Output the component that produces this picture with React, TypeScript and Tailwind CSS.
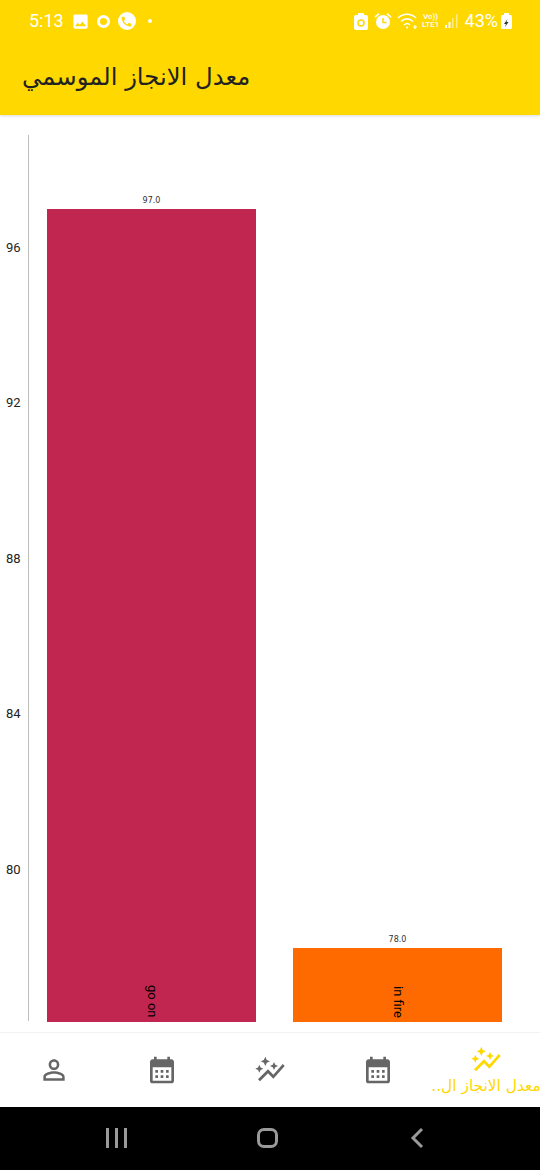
import React from 'react';
import { MdPersonOutline, MdCalendarMonth, MdAutoGraph, MdImage, MdPhone } from 'react-icons/md';

const axisLabels = [96, 92, 88, 84, 80];

const bars = [
  { name: 'go on', value: '97.0', height: 'h-[813px]', color: 'bg-[#c0264f]' },
  { name: 'in fire', value: '78.0', height: 'h-[74px]', color: 'bg-[#ff6a00]' },
];

const StatusBar: React.FC = () => (
  <div className="flex h-[42px] items-center pl-[29px] pr-[28px] text-white">
    <span className="text-[18px] leading-none">5:13</span>
    <MdImage className="ml-[7px]" size={19} />
    <span className="ml-[7px] h-[13px] w-[13px] rounded-full border-[3.5px] border-white" />
    <span className="ml-[8px] flex h-[18px] w-[18px] items-center justify-center rounded-full bg-white">
      <MdPhone className="text-[#ffd800]" size={13} />
    </span>
    <span className="ml-[12px] h-[4px] w-[4px] rounded-full bg-white" />
    <div className="ml-auto flex items-center">
      <svg width="14" height="17" viewBox="0 0 14 17" fill="white">
        <path d="M4 0h6v2h2a2 2 0 0 1 2 2v11a2 2 0 0 1-2 2H2a2 2 0 0 1-2-2V4a2 2 0 0 1 2-2h2z" />
        <circle cx="7" cy="10" r="3" fill="none" stroke="#ffd800" strokeWidth="1.5" />
      </svg>
      <svg className="ml-[6px]" width="18" height="18" viewBox="0 0 18 18" fill="white">
        <circle cx="9" cy="10" r="7" />
        <path d="M0.500 4.500 4.500 1l1 1.200-4 3.500zM17.500 4.500 13.500 1l-1 1.200 4 3.500z" />
        <path d="M9 6v4.500h3.500" fill="none" stroke="#ffd800" strokeWidth="1.500" />
      </svg>
      <svg className="ml-[5px]" width="22" height="18" viewBox="0 0 22 18" fill="none" stroke="white" strokeWidth="1.6">
        <path d="M1 6c5-5 13-5 18 0M4 9.500c3.500-3.500 8.500-3.500 12 0M7 13c2-2 4-2 6 0" />
        <circle cx="10" cy="15.500" r="1" fill="white" stroke="none" />
        <path d="M18 13v4M16 15h4" strokeWidth="1.200" />
      </svg>
      <div className="ml-[3px] flex w-[18px] flex-col items-center text-[8px] font-medium leading-[8px]">
        <span>Vo))</span>
        <span>LTE1</span>
      </div>
      <svg className="ml-[5px]" width="14" height="16" viewBox="0 0 14 16" fill="white">
        <rect x="0" y="12" width="2" height="3" />
        <rect x="3.500" y="9" width="2" height="6" />
        <rect x="7" y="5" width="1.500" height="10" opacity="0.5" />
        <rect x="11" y="1" width="1.500" height="14" opacity="0.5" />
      </svg>
      <span className="ml-[6px] text-[18px] leading-none">43%</span>
      <svg className="ml-[3px]" width="11" height="16" viewBox="0 0 11 16" fill="white">
        <path d="M3 0h5v2h1.500A1.500 1.500 0 0 1 11 3.500V14.500A1.500 1.500 0 0 1 9.500 16h-8A1.500 1.500 0 0 1 0 14.500V3.500A1.500 1.500 0 0 1 1.500 2H3z" />
        <path d="M6.500 6 3 11h2l-1 3 3.500-5h-2z" fill="#333" />
      </svg>
    </div>
  </div>
);

const Chart: React.FC = () => (
  <div className="flex h-[917px] flex-col pt-[20px]">
    <div className="flex h-[887px]">
      <div className="flex h-[886px] w-[29px] flex-col gap-[139.5px] border-r border-[#bdbdbd] pl-[6px] pt-[104.500px] text-[13px] leading-[16px] text-[#222]">
        {axisLabels.map(label => (
          <span key={label}>{label}</span>
        ))}
      </div>
      <div className="ml-[18px] flex items-end gap-[37px]">
        {bars.map(bar => (
          <div key={bar.name} className="flex w-[209px] flex-col items-center">
            <span className="mb-[2px] font-['DejaVu_Sans',sans-serif] text-[8px] leading-[12px] text-[#333]">{bar.value}</span>
            <div className={`flex w-full items-end justify-center pb-[4px] ${bar.height} ${bar.color}`}>
              <span className="text-[13px] leading-[14px] text-black [writing-mode:vertical-rl]">{bar.name}</span>
            </div>
          </div>
        ))}
      </div>
    </div>
  </div>
);

const BottomNav: React.FC = () => (
  <div className="grid h-[75px] grid-cols-5 border-t border-[#f2f2f2] text-[#666]">
    <div className="flex items-center justify-center pb-[1px]">
      <MdPersonOutline size={32} />
    </div>
    <div className="flex items-center justify-center pb-[1px]">
      <MdCalendarMonth size={32} />
    </div>
    <div className="flex items-center justify-center pb-[1px]">
      <MdAutoGraph size={32} />
    </div>
    <div className="flex items-center justify-center pb-[1px]">
      <MdCalendarMonth size={32} />
    </div>
    <div className="flex flex-col items-center pt-[11px] text-[#ffd800]">
      <MdAutoGraph size={32} />
      <span dir="rtl" className="whitespace-nowrap font-['DejaVu_Sans',sans-serif] text-[15.400px] leading-[21px]">معدل الانجاز ال..</span>
    </div>
  </div>
);

const AndroidBar: React.FC = () => (
  <div className="flex h-[63px] items-center bg-black pb-[1px] pl-[106px]">
    <div className="flex gap-[6px]">
      <span className="h-[20px] w-[3px] bg-[#9a9a9a]" />
      <span className="h-[20px] w-[3px] bg-[#9a9a9a]" />
      <span className="h-[20px] w-[3px] bg-[#9a9a9a]" />
    </div>
    <span className="ml-[130px] h-[20px] w-[21px] rounded-[7px] border-[3px] border-[#9a9a9a]" />
    <svg className="ml-[131px] text-[#9a9a9a]" width="16" height="22" viewBox="0 0 16 22" fill="none" stroke="currentColor" strokeWidth="3">
      <path d="M13 2 4 11l9 9" />
    </svg>
  </div>
);

const App: React.FC = () => (
  <div className="flex h-[1170px] w-[540px] flex-col overflow-hidden bg-white font-['Roboto',sans-serif]">
    <div className="h-[115px] bg-[#ffd800] shadow-[0_1px_3px_rgba(0,0,0,0.15)]">
      <StatusBar />
      <div className="flex h-[73px] items-center pb-[2px] pl-[22px]">
        <h1 dir="rtl" className="font-['DejaVu_Sans',sans-serif] text-[24.300px] font-normal leading-none text-[#222]">معدل الانجاز الموسمي</h1>
      </div>
    </div>
    <Chart />
    <BottomNav />
    <AndroidBar />
  </div>
);

export default App;
